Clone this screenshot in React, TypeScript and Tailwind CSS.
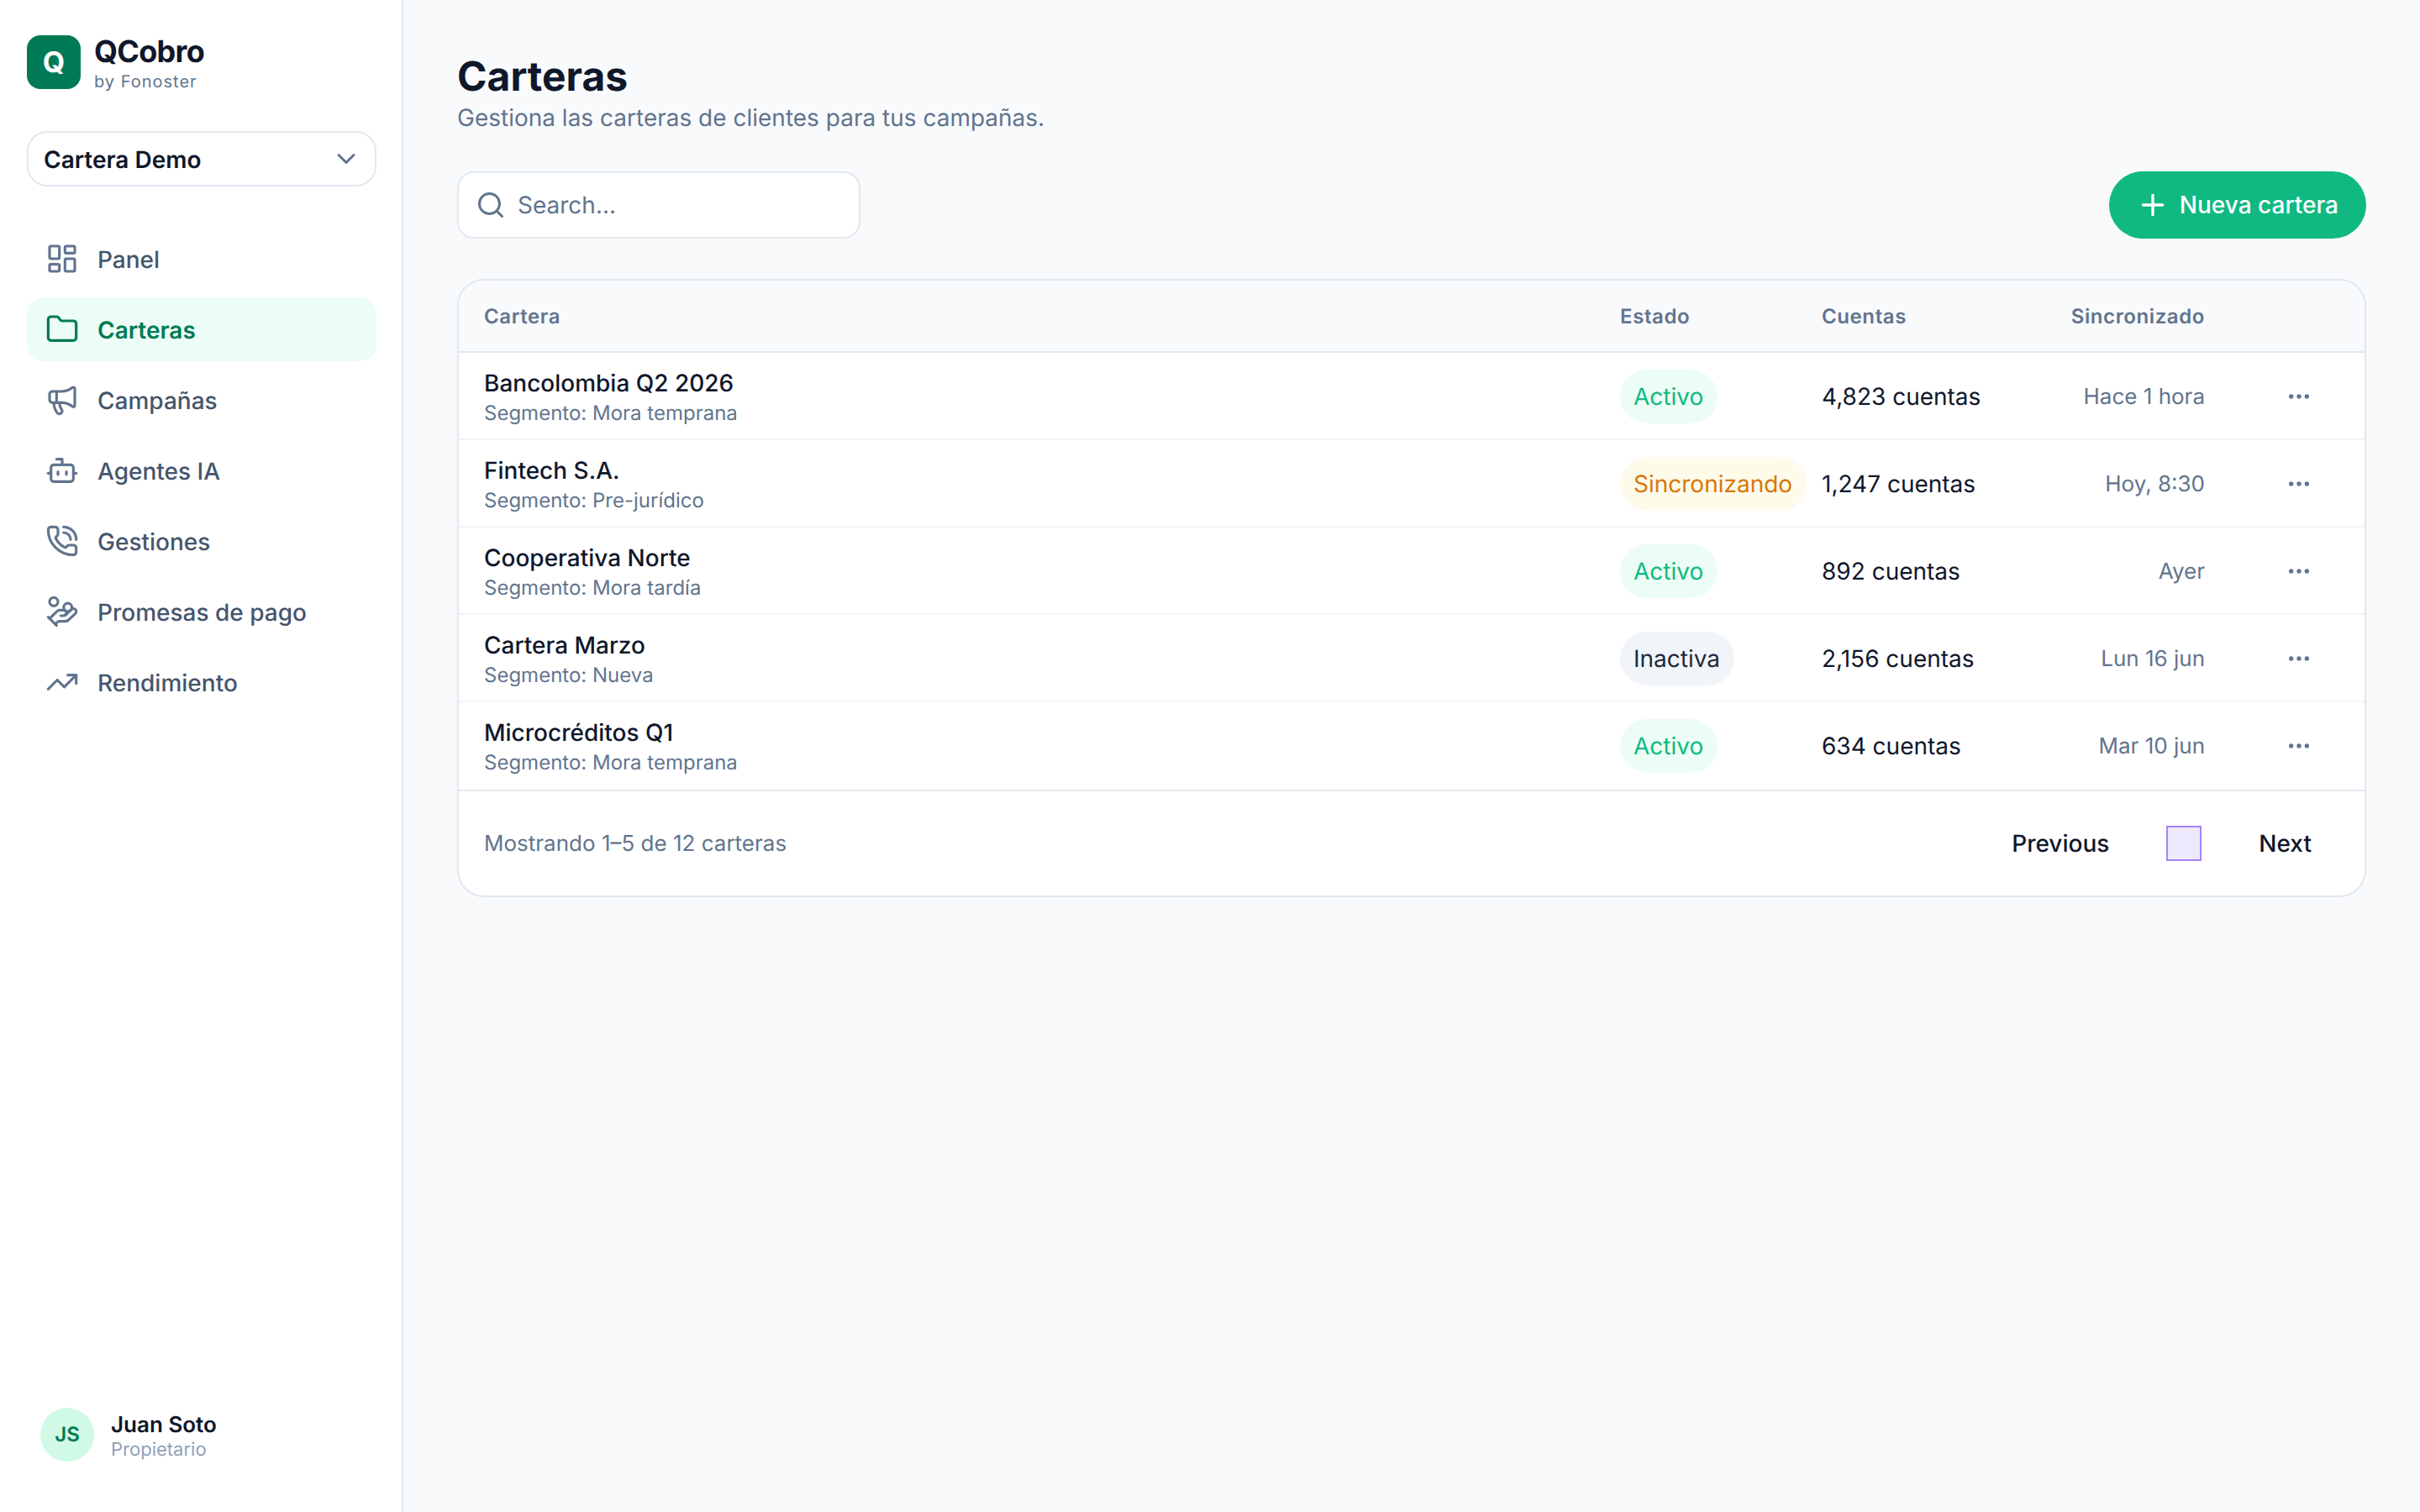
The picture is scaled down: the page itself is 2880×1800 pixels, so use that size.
import { Bot, ChevronDown, Ellipsis, Folder, HandCoins, LayoutDashboard, Megaphone, PhoneCall, Plus, Search, TrendingUp } from "lucide-react";

const nav = [
  { label: "Panel", icon: LayoutDashboard },
  { label: "Carteras", icon: Folder, active: true },
  { label: "Campañas", icon: Megaphone },
  { label: "Agentes IA", icon: Bot },
  { label: "Gestiones", icon: PhoneCall },
  { label: "Promesas de pago", icon: HandCoins },
  { label: "Rendimiento", icon: TrendingUp },
];

const pillStyles: Record<string, string> = {
  Activo: "bg-emerald-50 text-[#10b981]",
  Sincronizando: "bg-amber-50 text-[#d97706]",
  Inactiva: "bg-slate-100 text-slate-800",
};

const rows = [
  { name: "Bancolombia Q2 2026", seg: "Segmento: Mora temprana", status: "Activo", count: "4,823 cuentas", sync: "Hace 1 hora" },
  { name: "Fintech S.A.", seg: "Segmento: Pre-jurídico", status: "Sincronizando", count: "1,247 cuentas", sync: "Hoy, 8:30" },
  { name: "Cooperativa Norte", seg: "Segmento: Mora tardía", status: "Activo", count: "892 cuentas", sync: "Ayer" },
  { name: "Cartera Marzo", seg: "Segmento: Nueva", status: "Inactiva", count: "2,156 cuentas", sync: "Lun 16 jun" },
  { name: "Microcréditos Q1", seg: "Segmento: Mora temprana", status: "Activo", count: "634 cuentas", sync: "Mar 10 jun" },
];

const cols = "grid grid-cols-[1382px_240px_232px_224px_190px] items-center";

export default function App() {
  return (
    <div className="flex min-h-[1800px] bg-slate-50 font-[Inter,sans-serif] text-slate-900 [text-rendering:geometricPrecision]">
      <aside className="flex w-[480px] shrink-0 flex-col border-r-2 border-slate-200 bg-white pt-[42px] pr-[30px] pb-[60px] pl-8">
        <div className="flex h-16 items-center gap-4">
          <div className="flex size-16 items-center justify-center rounded-2xl bg-emerald-700 text-[34px] font-bold text-white">Q</div>
          <div className="pt-1.5">
            <div className="text-[36px] leading-[40px] font-bold tracking-[-0.7px]">QCobro</div>
            <div className="text-[20px] leading-[32px] tracking-[1px] text-slate-500">by Fonoster</div>
          </div>
        </div>

        <div className="mt-[50px] flex h-[66px] items-center justify-between rounded-3xl border-2 border-slate-200 bg-white pr-4 pl-[18px]">
          <span className="pt-0.5 text-[28px] font-semibold">Cartera Demo</span>
          <ChevronDown size={36} className="text-slate-500" strokeWidth={2} />
        </div>

        <nav className="mt-12 flex flex-col gap-2">
          {nav.map(({ label, icon: Icon, active }) => (
            <div
              key={label}
              className={`flex h-[76px] items-center gap-[22px] rounded-[20px] px-[22px] text-[28px] ${
                active ? "bg-emerald-50 font-semibold text-emerald-700" : "font-medium text-slate-600"
              }`}
            >
              <Icon size={40} strokeWidth={1.9} className={active ? "text-emerald-700" : "text-slate-500"} />
              <span className="pt-0.5">{label}</span>
            </div>
          ))}
        </nav>

        <div className="mt-auto flex items-center gap-5 px-4">
          <div className="flex size-16 items-center justify-center rounded-full bg-emerald-100 text-[24px] font-semibold text-emerald-700">JS</div>
          <div className="pt-1">
            <div className="text-[26px] leading-[32px] font-semibold">Juan Soto</div>
            <div className="text-[22px] leading-[26px] text-slate-400">Propietario</div>
          </div>
        </div>
      </aside>

      <main className="flex-1 px-16 pt-[62px]">
        <h1 className="text-[48px] leading-[58px] font-bold">Carteras</h1>
        <p className="text-[28px] leading-[40px] text-slate-500">Gestiona las carteras de clientes para tus campañas.</p>

        <div className="mt-[44px] flex items-center justify-between">
          <div className="flex h-20 w-[480px] items-center gap-[14px] rounded-[20px] border-2 border-slate-200 bg-white pl-5">
            <Search size={36} strokeWidth={2} className="text-slate-500" />
            <span className="text-[28px] text-slate-500">Search...</span>
          </div>
          <button className="flex h-20 items-center gap-3 rounded-full bg-[#10b981] pr-[33px] pl-8 text-[28px] font-medium text-white">
            <Plus size={40} strokeWidth={2} />
            Nueva cartera
          </button>
        </div>

        <div className="mt-12 overflow-hidden rounded-[32px] border-2 border-slate-200 bg-white">
          <div className={`${cols} h-[86px] border-b-2 border-slate-200 bg-slate-50 pt-0.5 text-[24px] font-semibold tracking-[0.6px] text-slate-500`}>
            <div className="pl-[30px]">Cartera</div>
            <div>Estado</div>
            <div>Cuentas</div>
            <div className="text-right">Sincronizado</div>
            <div />
          </div>

          {rows.map((r, i) => (
            <div key={r.name} className={`${cols} h-[104px] border-b-2 pt-0.5 ${i < 4 ? "border-slate-100" : "border-transparent"}`}>
              <div className="pt-0.5 pl-[30px]">
                <div className="text-[28px] leading-[36px] font-medium">{r.name}</div>
                <div className="text-[24px] leading-[35px] text-slate-500">{r.seg}</div>
              </div>
              <div>
                <span className={`inline-flex h-16 items-center rounded-full pr-[17px] pl-4 text-[28px] ${pillStyles[r.status]}`}>{r.status}</span>
              </div>
              <div className="text-[28px]">{r.count}</div>
              <div className="text-right text-[26px] text-slate-500">{r.sync}</div>
              <div className="flex justify-end pr-[62px]">
                <Ellipsis size={32} strokeWidth={2} className="text-slate-500" />
              </div>
            </div>
          ))}

          <div className="flex h-[126px] items-center justify-between border-t-2 border-slate-200 pr-[63px] pl-[30px]">
            <span className="text-[26px] text-slate-500">Mostrando 1–5 de 12 carteras</span>
            <div className="flex items-center gap-[68px] text-[28px] font-medium">
              <span>Previous</span>
              <span className="size-[42px] border-2 border-violet-400 bg-violet-100" />
              <span>Next</span>
            </div>
          </div>
        </div>
      </main>
    </div>
  );
}
